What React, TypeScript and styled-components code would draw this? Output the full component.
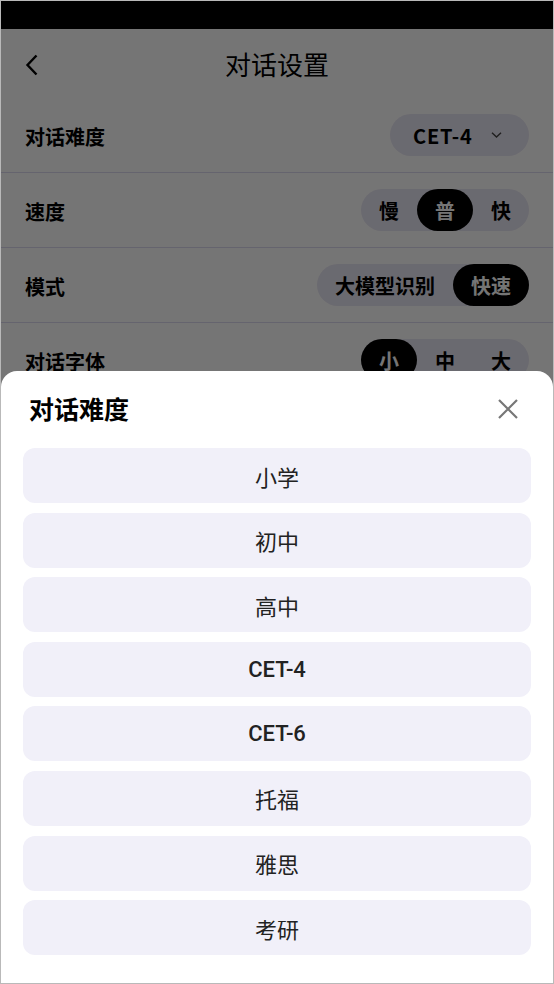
import styled, { createGlobalStyle } from "styled-components";

const levels = ["小学", "初中", "高中", "CET-4", "CET-6", "托福", "雅思", "考研"];

const GlobalStyle = createGlobalStyle`
  html, body {
    margin: 0;
    padding: 0;
    background: #ffffff;
  }
  * {
    box-sizing: border-box;
  }
`;

const BackIcon = () => (
  <svg width="14" height="22" viewBox="0 0 14 22" fill="none">
    <path d="M11.5 1.5L2.5 11L11.5 20.5" stroke="#000" strokeWidth="2.4" />
  </svg>
);

const ChevronDown = () => (
  <svg width="11" height="6" viewBox="0 0 11 6" fill="none">
    <path d="M1 0.8L5.5 5L10 0.8" stroke="#444" strokeWidth="1.4" />
  </svg>
);

const CloseIcon = () => (
  <svg width="22" height="22" viewBox="0 0 22 22" fill="none">
    <path d="M2 2L20 20M20 2L2 20" stroke="#777" strokeWidth="2.2" />
  </svg>
);

// latin labels like CET-4 render a bit heavier than the chinese ones
const isLatin = (text: string) => /^[A-Za-z0-9-]+$/.test(text);

const App = () => {
  return (
    <>
      <GlobalStyle />
      <Screen>
        <StatusBar />
        <Header>
          <BackButton>
            <BackIcon />
          </BackButton>
          <Title>对话设置</Title>
        </Header>

        <Row>
          <Label>对话难度</Label>
          <Picker>
            <PickerText>CET-4</PickerText>
            <ChevronDown />
          </Picker>
        </Row>
        <Row>
          <Label>速度</Label>
          <Segmented>
            <Segment>慢</Segment>
            <Segment $active>普</Segment>
            <Segment>快</Segment>
          </Segmented>
        </Row>
        <Row>
          <Label>模式</Label>
          <Segmented>
            <Segment>大模型识别</Segment>
            <Segment $active>快速</Segment>
          </Segmented>
        </Row>
        <Row>
          <Label>对话字体</Label>
          <Segmented>
            <Segment $active>小</Segment>
            <Segment>中</Segment>
            <Segment>大</Segment>
          </Segmented>
        </Row>

        <Overlay />
        <Sheet>
          <SheetHeader>
            <SheetTitle>对话难度</SheetTitle>
            <CloseButton>
              <CloseIcon />
            </CloseButton>
          </SheetHeader>
          <OptionList>
            {levels.map((level) => (
              <Option key={level} $latin={isLatin(level)}>
                {level}
              </Option>
            ))}
          </OptionList>
        </Sheet>
      </Screen>
    </>
  );
};

const Screen = styled.div`
  position: relative;
  width: 554px;
  height: 984px;
  border: 1px solid #b9b9b9;
  background: #ffffff;
  overflow: hidden;
  font-family: "Noto Sans CJK SC", "Noto Sans", sans-serif;
  color: #000;
`;

const StatusBar = styled.div`
  height: 28px;
  background: #000;
`;

const Header = styled.div`
  position: relative;
  height: 69px;
  display: flex;
  align-items: center;
  justify-content: center;
`;

const BackButton = styled.div`
  position: absolute;
  left: 24px;
  top: 25px;
  display: flex;
`;

const Title = styled.div`
  font-size: 26px;
  line-height: 1;
  margin-top: 1px;
`;

const Row = styled.div`
  height: 75px;
  display: flex;
  align-items: center;
  justify-content: space-between;
  padding: 0 24px;
  border-bottom: 1px solid #dddbef;
`;

const Label = styled.div`
  font-size: 20px;
  font-weight: 700;
  margin-top: 3px;
`;

const Picker = styled.div`
  height: 42px;
  width: 139px;
  border-radius: 21px;
  background: #e8e6f3;
  display: flex;
  align-items: center;
  padding-left: 23px;
  gap: 18px;
`;

const PickerText = styled.span`
  font-size: 20px;
  font-weight: 700;
  letter-spacing: 0.8px;
`;

const Segmented = styled.div`
  height: 42px;
  border-radius: 21px;
  background: #e8e6f3;
  display: flex;
`;

const Segment = styled.div<{ $active?: boolean }>`
  height: 42px;
  min-width: 56px;
  padding: 0 18px;
  border-radius: 21px;
  display: flex;
  align-items: center;
  justify-content: center;
  font-size: 20px;
  font-weight: 700;
  background: ${(p) => (p.$active ? "#000" : "transparent")};
  color: ${(p) => (p.$active ? "#fff" : "#000")};
`;

const Overlay = styled.div`
  position: absolute;
  inset: 0;
  background: rgba(0, 0, 0, 0.54);
`;

const Sheet = styled.div`
  position: absolute;
  left: 0;
  right: 0;
  top: 370px;
  bottom: 0;
  background: #ffffff;
  border-radius: 16px 16px 0 0;
  padding: 20px 22px 0;
`;

const SheetHeader = styled.div`
  height: 36px;
  display: flex;
  align-items: center;
  justify-content: space-between;
  padding-left: 6px;
  margin-bottom: 21px;
`;

const SheetTitle = styled.div`
  font-size: 25px;
  font-weight: 700;
  margin-top: -2px;
`;

const CloseButton = styled.div`
  display: flex;
  margin-right: 12px;
`;

const OptionList = styled.div`
  display: flex;
  flex-direction: column;
  gap: 9.6px;
`;

const Option = styled.div<{ $latin?: boolean }>`
  height: 55px;
  border-radius: 12px;
  background: #f1f0f9;
  display: flex;
  align-items: center;
  justify-content: center;
  font-family: Roboto, "Noto Sans CJK SC", sans-serif;
  font-size: 22px;
  font-weight: ${(p) => (p.$latin ? 500 : 400)};
  color: #222;
`;

export default App;
